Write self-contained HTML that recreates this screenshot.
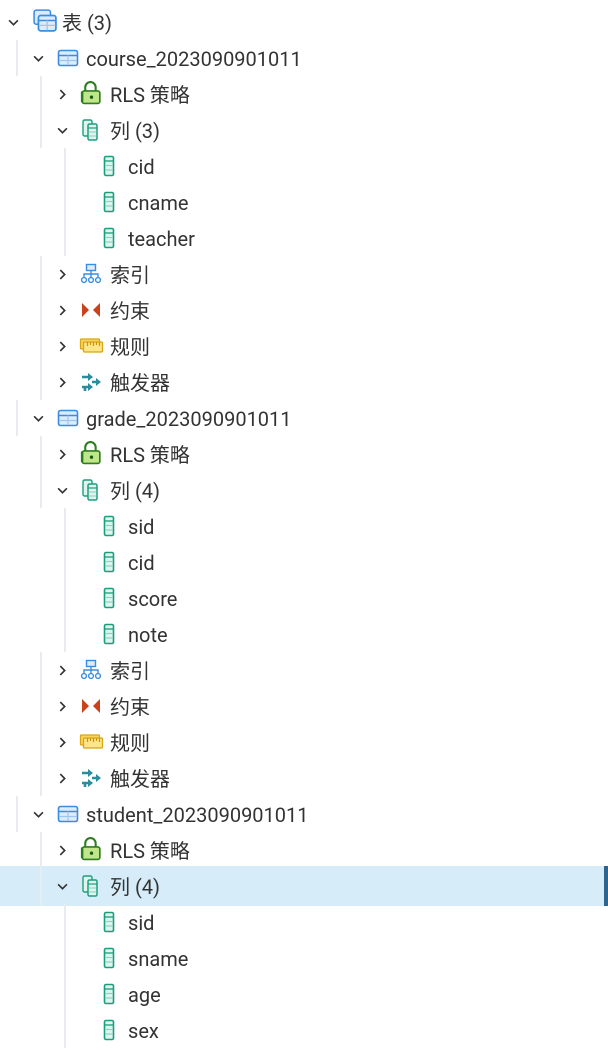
<!DOCTYPE html>
<html><head><meta charset="utf-8"><style>
body{margin:0;width:608px;height:1050px;background:#fff;overflow:hidden;position:relative;font-family:Roboto,"Liberation Sans","Noto Sans CJK SC",sans-serif;}
.r{position:absolute;left:0;width:608px;height:36px;}
.g{position:absolute;top:0;height:36px;width:2px;background:#e8ebef;}
.c{position:absolute;top:13px;}
.i{position:absolute;top:7px;}
.t{position:absolute;top:7px;font-size:20px;line-height:24px;color:#333;white-space:nowrap;}
.sel{background:#d6ecf9;height:40px;margin-top:-2px;}
.sel .bar{position:absolute;right:0;top:0;width:4px;height:40px;background:#2f6491;}
</style></head><body>

<div class="r" style="top:4px"><svg class="c" style="left:8px" width="11" height="11" viewBox="0 0 10 10"><polyline points="1,3 5,7 9,3" fill="none" stroke="#333" stroke-width="1.5"/></svg><svg class="i" style="left:33px;top:5px" width="24" height="24" viewBox="0 0 22 22"><rect x="1" y="1" width="15" height="13" rx="2" fill="#dcecfb" stroke="#3a8de0" stroke-width="1.4"/><rect x="5" y="6" width="16" height="14" rx="2" fill="#dcecfb" stroke="#3a8de0" stroke-width="1.6"/><line x1="5" y1="10.5" x2="21" y2="10.5" stroke="#3a8de0" stroke-width="1.4"/><line x1="5.5" y1="15" x2="20.5" y2="15" stroke="#9cc6ef" stroke-width="1.2"/><line x1="13" y1="10.5" x2="13" y2="19.5" stroke="#9cc6ef" stroke-width="1.2"/></svg><span class="t" style="left:62px">表 (3)</span></div>

<div class="r" style="top:40px"><div class="g" style="left:16px"></div><svg class="c" style="left:33px" width="11" height="11" viewBox="0 0 10 10"><polyline points="1,3 5,7 9,3" fill="none" stroke="#333" stroke-width="1.5"/></svg><svg class="i" style="left:57px" width="22" height="22" viewBox="0 0 22 22"><rect x="1.5" y="3.5" width="19" height="15" rx="2" fill="#dcecfb" stroke="#3a8de0" stroke-width="1.6"/><line x1="1.5" y1="8.5" x2="20.5" y2="8.5" stroke="#3a8de0" stroke-width="1.6"/><line x1="2" y1="13.5" x2="20" y2="13.5" stroke="#9cc6ef" stroke-width="1.2"/><line x1="11" y1="8.5" x2="11" y2="18" stroke="#9cc6ef" stroke-width="1.2"/></svg><span class="t" style="left:86px">course_2023090901011</span></div>
<div class="r" style="top:76px"><div class="g" style="left:40px"></div><svg class="c" style="left:57px" width="11" height="11" viewBox="0 0 10 10"><polyline points="3,1 7,5 3,9" fill="none" stroke="#333" stroke-width="1.5"/></svg><svg class="i" style="left:79px;top:4px" width="25" height="25" viewBox="0 0 24 24"><path d="M6 11V7a5 5 0 0 1 10 0v4" fill="none" stroke="#2e7d1e" stroke-width="2"/><rect x="3" y="10.5" width="17" height="12" rx="2" fill="#bfe68a" stroke="#2e7d1e" stroke-width="1.6"/><path d="M3 11 L3 21" stroke="#2e7d1e" stroke-width="2.4"/><circle cx="12" cy="16.5" r="1.6" fill="#1e5a12"/></svg><span class="t" style="left:110px">RLS 策略</span></div>
<div class="r" style="top:112px"><div class="g" style="left:40px"></div><svg class="c" style="left:57px" width="11" height="11" viewBox="0 0 10 10"><polyline points="1,3 5,7 9,3" fill="none" stroke="#333" stroke-width="1.5"/></svg><svg class="i" style="left:80px" width="22" height="22" viewBox="0 0 22 22"><rect x="3" y="1" width="9" height="16" rx="1.5" fill="#e0f4ee" stroke="#1a9e7f" stroke-width="1.4"/><rect x="8" y="5" width="9" height="16" rx="1.5" fill="#e0f4ee" stroke="#1a9e7f" stroke-width="1.5"/><line x1="8.5" y1="9" x2="16.5" y2="9" stroke="#1a9e7f" stroke-width="1.2"/><line x1="8.5" y1="13" x2="16.5" y2="13" stroke="#8fd3c2" stroke-width="1.1"/><line x1="8.5" y1="17" x2="16.5" y2="17" stroke="#8fd3c2" stroke-width="1.1"/></svg><span class="t" style="left:110px">列 (3)</span></div>
<div class="r" style="top:148px"><div class="g" style="left:64px"></div><svg class="i" style="left:103px" width="12" height="22" viewBox="0 0 12 22"><rect x="1.5" y="1.5" width="9" height="19" rx="1.5" fill="#e0f4ee" stroke="#1a9e7f" stroke-width="1.6"/><line x1="2" y1="6" x2="10" y2="6" stroke="#1a9e7f" stroke-width="1.3"/><line x1="2" y1="10.5" x2="10" y2="10.5" stroke="#8fd3c2" stroke-width="1.2"/><line x1="2" y1="15" x2="10" y2="15" stroke="#8fd3c2" stroke-width="1.2"/></svg><span class="t" style="left:128px">cid</span></div>
<div class="r" style="top:184px"><div class="g" style="left:64px"></div><svg class="i" style="left:103px" width="12" height="22" viewBox="0 0 12 22"><rect x="1.5" y="1.5" width="9" height="19" rx="1.5" fill="#e0f4ee" stroke="#1a9e7f" stroke-width="1.6"/><line x1="2" y1="6" x2="10" y2="6" stroke="#1a9e7f" stroke-width="1.3"/><line x1="2" y1="10.5" x2="10" y2="10.5" stroke="#8fd3c2" stroke-width="1.2"/><line x1="2" y1="15" x2="10" y2="15" stroke="#8fd3c2" stroke-width="1.2"/></svg><span class="t" style="left:128px">cname</span></div>
<div class="r" style="top:220px"><div class="g" style="left:64px"></div><svg class="i" style="left:103px" width="12" height="22" viewBox="0 0 12 22"><rect x="1.5" y="1.5" width="9" height="19" rx="1.5" fill="#e0f4ee" stroke="#1a9e7f" stroke-width="1.6"/><line x1="2" y1="6" x2="10" y2="6" stroke="#1a9e7f" stroke-width="1.3"/><line x1="2" y1="10.5" x2="10" y2="10.5" stroke="#8fd3c2" stroke-width="1.2"/><line x1="2" y1="15" x2="10" y2="15" stroke="#8fd3c2" stroke-width="1.2"/></svg><span class="t" style="left:128px">teacher</span></div>
<div class="r" style="top:256px"><div class="g" style="left:40px"></div><svg class="c" style="left:57px" width="11" height="11" viewBox="0 0 10 10"><polyline points="3,1 7,5 3,9" fill="none" stroke="#333" stroke-width="1.5"/></svg><svg class="i" style="left:80px" width="22" height="22" viewBox="0 0 22 22"><rect x="6.5" y="1.5" width="9" height="6" fill="#dcecfb" stroke="#3a8de0" stroke-width="1.4"/><path d="M11 7.5V11M4 14V11H18V14M11 11V14" fill="none" stroke="#3a8de0" stroke-width="1.4"/><circle cx="4" cy="17" r="2.4" fill="#fff" stroke="#3a8de0" stroke-width="1.4"/><circle cx="11" cy="17" r="2.4" fill="#fff" stroke="#3a8de0" stroke-width="1.4"/><circle cx="18" cy="17" r="2.4" fill="#fff" stroke="#3a8de0" stroke-width="1.4"/></svg><span class="t" style="left:110px">索引</span></div>
<div class="r" style="top:292px"><div class="g" style="left:40px"></div><svg class="c" style="left:57px" width="11" height="11" viewBox="0 0 10 10"><polyline points="3,1 7,5 3,9" fill="none" stroke="#333" stroke-width="1.5"/></svg><svg class="i" style="left:80px" width="22" height="22" viewBox="0 0 22 22"><polygon points="2,4 9,11 2,18" fill="#c8421c"/><polygon points="20,4 13,11 20,18" fill="#c8421c"/></svg><span class="t" style="left:110px">约束</span></div>
<div class="r" style="top:328px"><div class="g" style="left:40px"></div><svg class="c" style="left:57px" width="11" height="11" viewBox="0 0 10 10"><polyline points="3,1 7,5 3,9" fill="none" stroke="#333" stroke-width="1.5"/></svg><svg class="i" style="left:79px" width="25" height="22" viewBox="0 0 24 22"><rect x="1" y="4" width="19" height="10" rx="1" fill="#f8d45c" stroke="#d9a514" stroke-width="1.3"/><rect x="4" y="7" width="19" height="10" rx="1" fill="#fde58a" stroke="#d9a514" stroke-width="1.3"/><path d="M8 7v4M11 7v3M14 7v4M17 7v3M20 7v4" stroke="#c99410" stroke-width="1.2"/></svg><span class="t" style="left:110px">规则</span></div>
<div class="r" style="top:364px"><div class="g" style="left:40px"></div><svg class="c" style="left:57px" width="11" height="11" viewBox="0 0 10 10"><polyline points="3,1 7,5 3,9" fill="none" stroke="#333" stroke-width="1.5"/></svg><svg class="i" style="left:80px" width="22" height="22" viewBox="0 0 22 22"><path d="M2 6h8M2 16h8M12 11h5M5 16V20" stroke="#2a8c9c" stroke-width="2.6"/><polygon points="8,2 13,6 8,10" fill="#2a8c9c"/><polygon points="8,12 13,16 8,20" fill="#2a8c9c"/><polygon points="16,7 21,11 16,15" fill="#2a8c9c"/></svg><span class="t" style="left:110px">触发器</span></div>

<div class="r" style="top:400px"><div class="g" style="left:16px"></div><svg class="c" style="left:33px" width="11" height="11" viewBox="0 0 10 10"><polyline points="1,3 5,7 9,3" fill="none" stroke="#333" stroke-width="1.5"/></svg><svg class="i" style="left:57px" width="22" height="22" viewBox="0 0 22 22"><rect x="1.5" y="3.5" width="19" height="15" rx="2" fill="#dcecfb" stroke="#3a8de0" stroke-width="1.6"/><line x1="1.5" y1="8.5" x2="20.5" y2="8.5" stroke="#3a8de0" stroke-width="1.6"/><line x1="2" y1="13.5" x2="20" y2="13.5" stroke="#9cc6ef" stroke-width="1.2"/><line x1="11" y1="8.5" x2="11" y2="18" stroke="#9cc6ef" stroke-width="1.2"/></svg><span class="t" style="left:86px">grade_2023090901011</span></div>
<div class="r" style="top:436px"><div class="g" style="left:40px"></div><svg class="c" style="left:57px" width="11" height="11" viewBox="0 0 10 10"><polyline points="3,1 7,5 3,9" fill="none" stroke="#333" stroke-width="1.5"/></svg><svg class="i" style="left:79px;top:4px" width="25" height="25" viewBox="0 0 24 24"><path d="M6 11V7a5 5 0 0 1 10 0v4" fill="none" stroke="#2e7d1e" stroke-width="2"/><rect x="3" y="10.5" width="17" height="12" rx="2" fill="#bfe68a" stroke="#2e7d1e" stroke-width="1.6"/><path d="M3 11 L3 21" stroke="#2e7d1e" stroke-width="2.4"/><circle cx="12" cy="16.5" r="1.6" fill="#1e5a12"/></svg><span class="t" style="left:110px">RLS 策略</span></div>
<div class="r" style="top:472px"><div class="g" style="left:40px"></div><svg class="c" style="left:57px" width="11" height="11" viewBox="0 0 10 10"><polyline points="1,3 5,7 9,3" fill="none" stroke="#333" stroke-width="1.5"/></svg><svg class="i" style="left:80px" width="22" height="22" viewBox="0 0 22 22"><rect x="3" y="1" width="9" height="16" rx="1.5" fill="#e0f4ee" stroke="#1a9e7f" stroke-width="1.4"/><rect x="8" y="5" width="9" height="16" rx="1.5" fill="#e0f4ee" stroke="#1a9e7f" stroke-width="1.5"/><line x1="8.5" y1="9" x2="16.5" y2="9" stroke="#1a9e7f" stroke-width="1.2"/><line x1="8.5" y1="13" x2="16.5" y2="13" stroke="#8fd3c2" stroke-width="1.1"/><line x1="8.5" y1="17" x2="16.5" y2="17" stroke="#8fd3c2" stroke-width="1.1"/></svg><span class="t" style="left:110px">列 (4)</span></div>
<div class="r" style="top:508px"><div class="g" style="left:64px"></div><svg class="i" style="left:103px" width="12" height="22" viewBox="0 0 12 22"><rect x="1.5" y="1.5" width="9" height="19" rx="1.5" fill="#e0f4ee" stroke="#1a9e7f" stroke-width="1.6"/><line x1="2" y1="6" x2="10" y2="6" stroke="#1a9e7f" stroke-width="1.3"/><line x1="2" y1="10.5" x2="10" y2="10.5" stroke="#8fd3c2" stroke-width="1.2"/><line x1="2" y1="15" x2="10" y2="15" stroke="#8fd3c2" stroke-width="1.2"/></svg><span class="t" style="left:128px">sid</span></div>
<div class="r" style="top:544px"><div class="g" style="left:64px"></div><svg class="i" style="left:103px" width="12" height="22" viewBox="0 0 12 22"><rect x="1.5" y="1.5" width="9" height="19" rx="1.5" fill="#e0f4ee" stroke="#1a9e7f" stroke-width="1.6"/><line x1="2" y1="6" x2="10" y2="6" stroke="#1a9e7f" stroke-width="1.3"/><line x1="2" y1="10.5" x2="10" y2="10.5" stroke="#8fd3c2" stroke-width="1.2"/><line x1="2" y1="15" x2="10" y2="15" stroke="#8fd3c2" stroke-width="1.2"/></svg><span class="t" style="left:128px">cid</span></div>
<div class="r" style="top:580px"><div class="g" style="left:64px"></div><svg class="i" style="left:103px" width="12" height="22" viewBox="0 0 12 22"><rect x="1.5" y="1.5" width="9" height="19" rx="1.5" fill="#e0f4ee" stroke="#1a9e7f" stroke-width="1.6"/><line x1="2" y1="6" x2="10" y2="6" stroke="#1a9e7f" stroke-width="1.3"/><line x1="2" y1="10.5" x2="10" y2="10.5" stroke="#8fd3c2" stroke-width="1.2"/><line x1="2" y1="15" x2="10" y2="15" stroke="#8fd3c2" stroke-width="1.2"/></svg><span class="t" style="left:128px">score</span></div>
<div class="r" style="top:616px"><div class="g" style="left:64px"></div><svg class="i" style="left:103px" width="12" height="22" viewBox="0 0 12 22"><rect x="1.5" y="1.5" width="9" height="19" rx="1.5" fill="#e0f4ee" stroke="#1a9e7f" stroke-width="1.6"/><line x1="2" y1="6" x2="10" y2="6" stroke="#1a9e7f" stroke-width="1.3"/><line x1="2" y1="10.5" x2="10" y2="10.5" stroke="#8fd3c2" stroke-width="1.2"/><line x1="2" y1="15" x2="10" y2="15" stroke="#8fd3c2" stroke-width="1.2"/></svg><span class="t" style="left:128px">note</span></div>
<div class="r" style="top:652px"><div class="g" style="left:40px"></div><svg class="c" style="left:57px" width="11" height="11" viewBox="0 0 10 10"><polyline points="3,1 7,5 3,9" fill="none" stroke="#333" stroke-width="1.5"/></svg><svg class="i" style="left:80px" width="22" height="22" viewBox="0 0 22 22"><rect x="6.5" y="1.5" width="9" height="6" fill="#dcecfb" stroke="#3a8de0" stroke-width="1.4"/><path d="M11 7.5V11M4 14V11H18V14M11 11V14" fill="none" stroke="#3a8de0" stroke-width="1.4"/><circle cx="4" cy="17" r="2.4" fill="#fff" stroke="#3a8de0" stroke-width="1.4"/><circle cx="11" cy="17" r="2.4" fill="#fff" stroke="#3a8de0" stroke-width="1.4"/><circle cx="18" cy="17" r="2.4" fill="#fff" stroke="#3a8de0" stroke-width="1.4"/></svg><span class="t" style="left:110px">索引</span></div>
<div class="r" style="top:688px"><div class="g" style="left:40px"></div><svg class="c" style="left:57px" width="11" height="11" viewBox="0 0 10 10"><polyline points="3,1 7,5 3,9" fill="none" stroke="#333" stroke-width="1.5"/></svg><svg class="i" style="left:80px" width="22" height="22" viewBox="0 0 22 22"><polygon points="2,4 9,11 2,18" fill="#c8421c"/><polygon points="20,4 13,11 20,18" fill="#c8421c"/></svg><span class="t" style="left:110px">约束</span></div>
<div class="r" style="top:724px"><div class="g" style="left:40px"></div><svg class="c" style="left:57px" width="11" height="11" viewBox="0 0 10 10"><polyline points="3,1 7,5 3,9" fill="none" stroke="#333" stroke-width="1.5"/></svg><svg class="i" style="left:79px" width="25" height="22" viewBox="0 0 24 22"><rect x="1" y="4" width="19" height="10" rx="1" fill="#f8d45c" stroke="#d9a514" stroke-width="1.3"/><rect x="4" y="7" width="19" height="10" rx="1" fill="#fde58a" stroke="#d9a514" stroke-width="1.3"/><path d="M8 7v4M11 7v3M14 7v4M17 7v3M20 7v4" stroke="#c99410" stroke-width="1.2"/></svg><span class="t" style="left:110px">规则</span></div>
<div class="r" style="top:760px"><div class="g" style="left:40px"></div><svg class="c" style="left:57px" width="11" height="11" viewBox="0 0 10 10"><polyline points="3,1 7,5 3,9" fill="none" stroke="#333" stroke-width="1.5"/></svg><svg class="i" style="left:80px" width="22" height="22" viewBox="0 0 22 22"><path d="M2 6h8M2 16h8M12 11h5M5 16V20" stroke="#2a8c9c" stroke-width="2.6"/><polygon points="8,2 13,6 8,10" fill="#2a8c9c"/><polygon points="8,12 13,16 8,20" fill="#2a8c9c"/><polygon points="16,7 21,11 16,15" fill="#2a8c9c"/></svg><span class="t" style="left:110px">触发器</span></div>

<div class="r" style="top:796px"><div class="g" style="left:16px"></div><svg class="c" style="left:33px" width="11" height="11" viewBox="0 0 10 10"><polyline points="1,3 5,7 9,3" fill="none" stroke="#333" stroke-width="1.5"/></svg><svg class="i" style="left:57px" width="22" height="22" viewBox="0 0 22 22"><rect x="1.5" y="3.5" width="19" height="15" rx="2" fill="#dcecfb" stroke="#3a8de0" stroke-width="1.6"/><line x1="1.5" y1="8.5" x2="20.5" y2="8.5" stroke="#3a8de0" stroke-width="1.6"/><line x1="2" y1="13.5" x2="20" y2="13.5" stroke="#9cc6ef" stroke-width="1.2"/><line x1="11" y1="8.5" x2="11" y2="18" stroke="#9cc6ef" stroke-width="1.2"/></svg><span class="t" style="left:86px">student_2023090901011</span></div>
<div class="r" style="top:832px"><div class="g" style="left:40px"></div><svg class="c" style="left:57px" width="11" height="11" viewBox="0 0 10 10"><polyline points="3,1 7,5 3,9" fill="none" stroke="#333" stroke-width="1.5"/></svg><svg class="i" style="left:79px;top:4px" width="25" height="25" viewBox="0 0 24 24"><path d="M6 11V7a5 5 0 0 1 10 0v4" fill="none" stroke="#2e7d1e" stroke-width="2"/><rect x="3" y="10.5" width="17" height="12" rx="2" fill="#bfe68a" stroke="#2e7d1e" stroke-width="1.6"/><path d="M3 11 L3 21" stroke="#2e7d1e" stroke-width="2.4"/><circle cx="12" cy="16.5" r="1.6" fill="#1e5a12"/></svg><span class="t" style="left:110px">RLS 策略</span></div>
<div class="r sel" style="top:868px"><div class="g" style="left:40px;height:40px"></div><div class="bar"></div><svg class="c" style="left:57px;top:15px" width="11" height="11" viewBox="0 0 10 10"><polyline points="1,3 5,7 9,3" fill="none" stroke="#333" stroke-width="1.5"/></svg><svg class="i" style="left:80px;top:9px" width="22" height="22" viewBox="0 0 22 22"><rect x="3" y="1" width="9" height="16" rx="1.5" fill="#e0f4ee" stroke="#1a9e7f" stroke-width="1.4"/><rect x="8" y="5" width="9" height="16" rx="1.5" fill="#e0f4ee" stroke="#1a9e7f" stroke-width="1.5"/><line x1="8.5" y1="9" x2="16.5" y2="9" stroke="#1a9e7f" stroke-width="1.2"/><line x1="8.5" y1="13" x2="16.5" y2="13" stroke="#8fd3c2" stroke-width="1.1"/><line x1="8.5" y1="17" x2="16.5" y2="17" stroke="#8fd3c2" stroke-width="1.1"/></svg><span class="t" style="left:110px;top:9px">列 (4)</span></div>
<div class="r" style="top:904px"><div class="g" style="left:64px"></div><svg class="i" style="left:103px" width="12" height="22" viewBox="0 0 12 22"><rect x="1.5" y="1.5" width="9" height="19" rx="1.5" fill="#e0f4ee" stroke="#1a9e7f" stroke-width="1.6"/><line x1="2" y1="6" x2="10" y2="6" stroke="#1a9e7f" stroke-width="1.3"/><line x1="2" y1="10.5" x2="10" y2="10.5" stroke="#8fd3c2" stroke-width="1.2"/><line x1="2" y1="15" x2="10" y2="15" stroke="#8fd3c2" stroke-width="1.2"/></svg><span class="t" style="left:128px">sid</span></div>
<div class="r" style="top:940px"><div class="g" style="left:64px"></div><svg class="i" style="left:103px" width="12" height="22" viewBox="0 0 12 22"><rect x="1.5" y="1.5" width="9" height="19" rx="1.5" fill="#e0f4ee" stroke="#1a9e7f" stroke-width="1.6"/><line x1="2" y1="6" x2="10" y2="6" stroke="#1a9e7f" stroke-width="1.3"/><line x1="2" y1="10.5" x2="10" y2="10.5" stroke="#8fd3c2" stroke-width="1.2"/><line x1="2" y1="15" x2="10" y2="15" stroke="#8fd3c2" stroke-width="1.2"/></svg><span class="t" style="left:128px">sname</span></div>
<div class="r" style="top:976px"><div class="g" style="left:64px"></div><svg class="i" style="left:103px" width="12" height="22" viewBox="0 0 12 22"><rect x="1.5" y="1.5" width="9" height="19" rx="1.5" fill="#e0f4ee" stroke="#1a9e7f" stroke-width="1.6"/><line x1="2" y1="6" x2="10" y2="6" stroke="#1a9e7f" stroke-width="1.3"/><line x1="2" y1="10.5" x2="10" y2="10.5" stroke="#8fd3c2" stroke-width="1.2"/><line x1="2" y1="15" x2="10" y2="15" stroke="#8fd3c2" stroke-width="1.2"/></svg><span class="t" style="left:128px">age</span></div>
<div class="r" style="top:1012px"><div class="g" style="left:64px"></div><svg class="i" style="left:103px" width="12" height="22" viewBox="0 0 12 22"><rect x="1.5" y="1.5" width="9" height="19" rx="1.5" fill="#e0f4ee" stroke="#1a9e7f" stroke-width="1.6"/><line x1="2" y1="6" x2="10" y2="6" stroke="#1a9e7f" stroke-width="1.3"/><line x1="2" y1="10.5" x2="10" y2="10.5" stroke="#8fd3c2" stroke-width="1.2"/><line x1="2" y1="15" x2="10" y2="15" stroke="#8fd3c2" stroke-width="1.2"/></svg><span class="t" style="left:128px">sex</span></div>
</body></html>
